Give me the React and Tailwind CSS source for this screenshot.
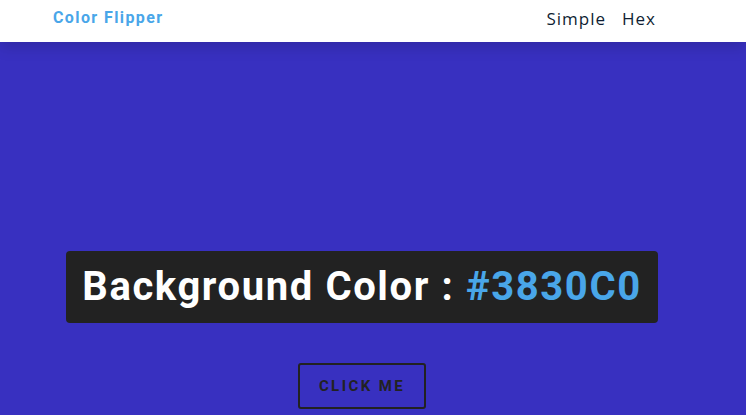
import React, { useState } from 'react'

const colors = ['#3830C0', '#F15025', '#2E7D32', '#6A1B9A']

export default function App(){
  const [color, setColor] = useState('#3830C0')

  function flip(){
    const next = colors[Math.floor(Math.random() * colors.length)]
    setColor(next)
  }

  return (
    <div className="min-h-screen overflow-hidden" style={{ backgroundColor: color }}>
      <nav className="h-[42px] bg-white shadow-[0_5px_15px_rgba(0,0,0,0.15)] relative z-10">
        <div className="h-full flex items-center justify-between pl-[53px] pr-[90px]">
          <h4 className="font-['Roboto',sans-serif] font-bold text-[16px] tracking-[1.4px] text-[#49a6e9] -mt-[6px]">Color Flipper</h4>
          <ul className="flex gap-[16px] font-['Open_Sans',sans-serif] text-[17px] text-[#0f1e33] tracking-[1px] -mt-[5px]">
            <li><a href="#">Simple</a></li>
            <li><a href="#">Hex</a></li>
          </ul>
        </div>
      </nav>
      <main className="flex justify-center pt-[209px] pr-[22px]">
        <div className="flex flex-col items-center">
          <h2 className="bg-[#222] rounded-[4px] w-[592px] h-[72px] flex items-center justify-center font-['Roboto',sans-serif] font-bold text-[40px] tracking-[1.6px] text-white">
            Background Color :&nbsp;<span className="text-[#49a6e9]">{color.toUpperCase()}</span>
          </h2>
          <button onClick={flip} className="mt-[40px] w-[128px] h-[46px] border-2 border-[#222] rounded-[3px] font-['Roboto',sans-serif] font-bold text-[15px] tracking-[2.4px] text-[#222] uppercase">
            Click me
          </button>
        </div>
      </main>
    </div>
  )
}
